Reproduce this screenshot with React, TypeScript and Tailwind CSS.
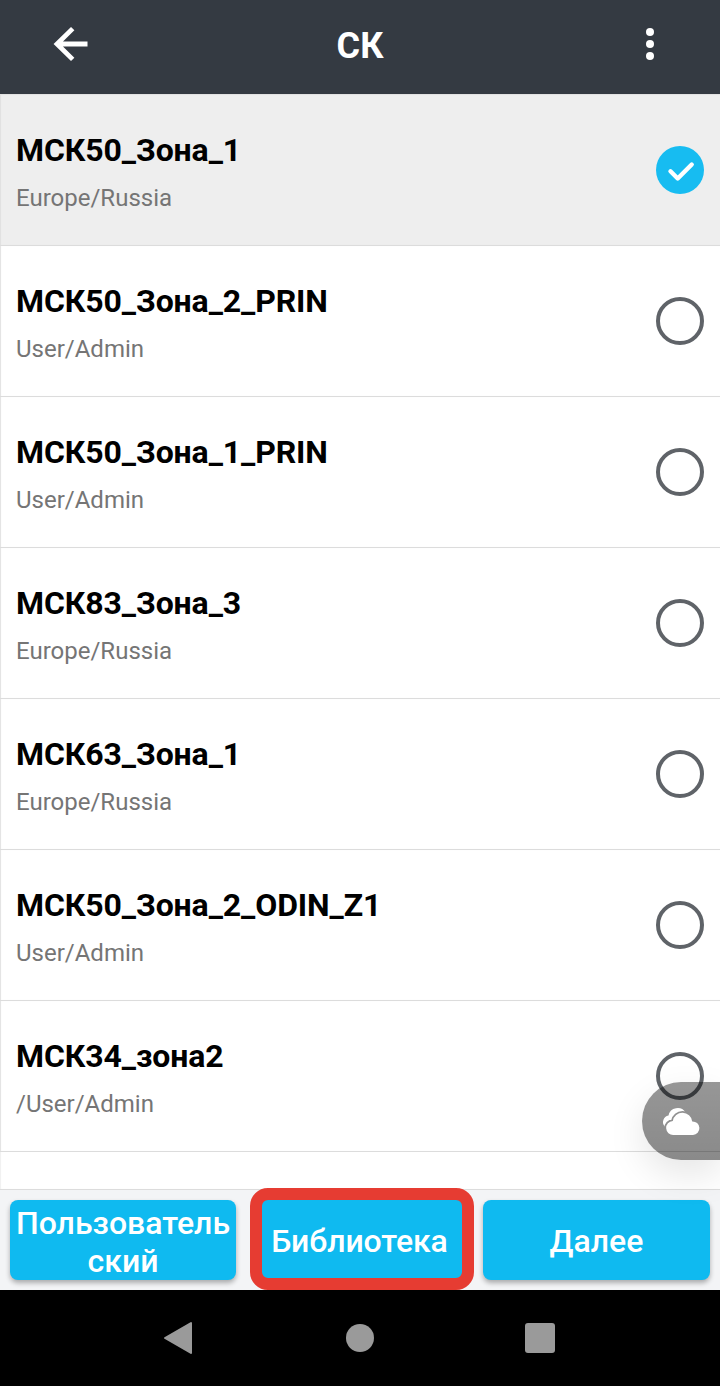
import { useState } from 'react';

interface CoordinateSystem {
    id: number;
    name: string;
    path: string;
}

const systems: CoordinateSystem[] = [
    { id: 1, name: 'МСК50_Зона_1', path: 'Europe/Russia' },
    { id: 2, name: 'МСК50_Зона_2_PRIN', path: 'User/Admin' },
    { id: 3, name: 'МСК50_Зона_1_PRIN', path: 'User/Admin' },
    { id: 4, name: 'МСК83_Зона_3', path: 'Europe/Russia' },
    { id: 5, name: 'МСК63_Зона_1', path: 'Europe/Russia' },
    { id: 6, name: 'МСК50_Зона_2_ODIN_Z1', path: 'User/Admin' },
    { id: 7, name: 'МСК34_зона2', path: '/User/Admin' },
];

function Header() {
    return (
        <header className="grid h-[94px] grid-cols-3 items-center bg-[#343a42] px-[52px] text-white">
            <button aria-label="Назад" className="justify-self-start">
                <svg width="40" height="40" viewBox="0 0 40 40" fill="none" stroke="currentColor" strokeWidth="4.8" className="-translate-y-[3px]">
                    <path d="M35.5 20H5M20.7 4.6L5 20l15.7 15.4" />
                </svg>
            </button>
            <h1 className="-translate-y-px text-center text-[36px] leading-[42px] font-bold">СК</h1>
            <button aria-label="Меню" className="mr-[6px] flex w-6 -translate-y-[3px] flex-col items-center gap-1 justify-self-end">
                <span className="h-2 w-2 rounded-full bg-white" />
                <span className="h-2 w-2 rounded-full bg-white" />
                <span className="h-2 w-2 rounded-full bg-white" />
            </button>
        </header>
    );
}

function Radio({ checked }: { checked: boolean }) {
    if (!checked) return <span className="h-12 w-12 shrink-0 rounded-full border-4 border-[#5f6368]" />;
    return (
        <span className="h-12 w-12 shrink-0 rounded-full bg-[#17bcf1]">
            <svg width="48" height="48" viewBox="0 0 48 48" fill="none" stroke="#fff" strokeWidth="4.4" strokeLinecap="round" strokeLinejoin="round">
                <path d="M14.5 25.3l7.2 7.2 14-14" />
            </svg>
        </span>
    );
}

// Floating cloud button, sticks to the right edge above the list
function CloudButton() {
    const frontCloud = 'M31.5 53a7 7 0 0 1-.7-14A9.800 9.800 0 0 1 50.200 39.400A6.800 6.800 0 0 1 51 53z';
    return (
        <button
            aria-label="Облако"
            className="absolute top-[1082px] right-0 h-[78px] w-[78px] rounded-l-full bg-linear-to-b from-black/41 to-black/46 shadow-[0_14px_36px_rgba(0,0,0,0.1)]"
        >
            <svg width="78" height="78" viewBox="0 0 78 78" fill="#fff">
                <mask id="cloudGap">
                    <rect width="78" height="78" fill="#fff" />
                    <path d={frontCloud} fill="#000" stroke="#000" strokeWidth="3.6" />
                </mask>
                <path d="M22.800 44.500A6.600 6.600 0 0 1 26.500 33.500A9.300 9.300 0 0 1 43.500 30.500L40 44.500z" mask="url(#cloudGap)" />
                <path d={frontCloud} />
            </svg>
        </button>
    );
}

function NavBar() {
    return (
        <nav className="flex h-24 items-center justify-between bg-black pr-[165px] pl-[162px] text-[#9a9a9a]">
            <svg width="32" height="34" viewBox="0 0 32 34" fill="currentColor" stroke="currentColor" strokeWidth="2" strokeLinejoin="round">
                <path d="M3 17L29 2v30z" />
            </svg>
            <span className="h-7 w-7 rounded-full bg-current" />
            <span className="h-[30px] w-[30px] rounded-[3px] bg-current" />
        </nav>
    );
}

const buttonClass = 'flex shrink-0 items-center justify-center bg-[#0fbaf0] text-center text-[32px] leading-[38px] font-medium text-white';
const shadowClass = 'h-20 rounded-lg shadow-[0_3px_5px_rgba(0,0,0,0.3)]';

export default function App() {
    const [selected, setSelected] = useState(1);

    return (
        <div className="relative flex h-[1386px] w-[720px] flex-col overflow-hidden bg-white font-[Roboto,sans-serif]">
            <Header />
            <ul className="flex-1 border-t border-t-[#e2e2e2] shadow-[inset_1px_0_1px_#f0f0f0]">
                {systems.map((system) => (
                    <li
                        key={system.id}
                        onClick={() => setSelected(system.id)}
                        className={`flex h-[151px] items-center justify-between border-b border-[#dcdcdc] px-4 shadow-[inset_1px_0_1px_rgba(0,0,0,0.06)] ${selected === system.id ? 'bg-[#eeeeee]' : ''}`}
                    >
                        <div className="pt-[3px]">
                            <p className="text-[32px] leading-[38px] font-bold tracking-[-0.1px] text-black">{system.name}</p>
                            <p className="mt-[15px] text-[24px] leading-[28px] text-[#757575]">{system.path}</p>
                        </div>
                        <Radio checked={selected === system.id} />
                    </li>
                ))}
            </ul>
            <footer className="flex h-[101px] items-center border-t border-[#dcdcdc] bg-[#f3f4f6] pl-[10px]">
                <button className={`${buttonClass} ${shadowClass} w-[226px] pt-1`}>
                    <span>Пользователь<br />ский</span>
                </button>
                <button className={`${buttonClass} z-10 -mt-[2px] ml-[14px] h-[102px] w-[224px] rounded-[18px] border-12 border-[#e63c32] pt-[3px] pr-[5px] tracking-[-0.1px]`}>
                    Библиотека
                </button>
                <button className={`${buttonClass} ${shadowClass} ml-[9px] w-[227px] pt-[2px]`}>Далее</button>
            </footer>
            <NavBar />
            <CloudButton />
        </div>
    );
}
